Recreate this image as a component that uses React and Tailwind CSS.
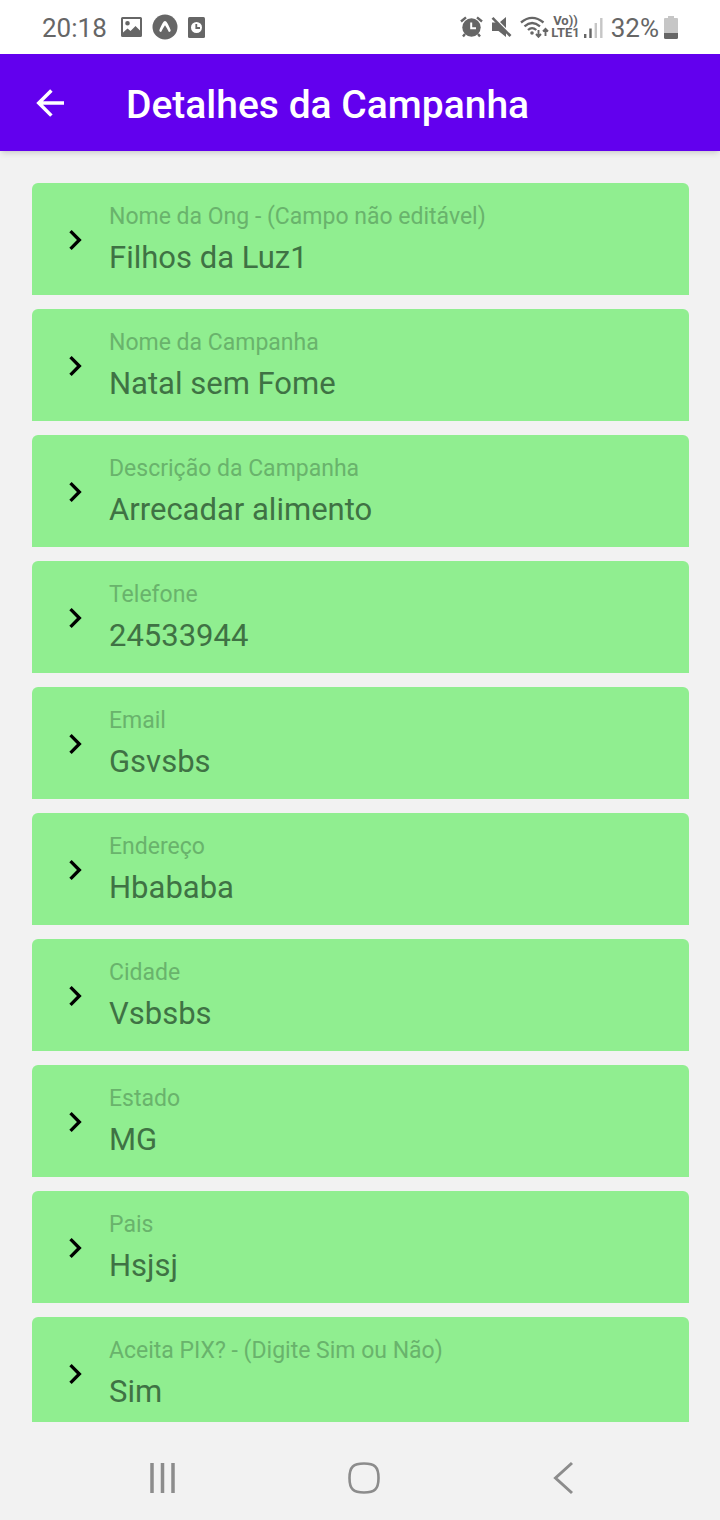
import React from "react";

const fields = [
  { id: "ong", label: "Nome da Ong - (Campo não editável)", value: "Filhos da Luz1" },
  { id: "campanha", label: "Nome da Campanha", value: "Natal sem Fome" },
  { id: "descricao", label: "Descrição da Campanha", value: "Arrecadar alimento" },
  { id: "telefone", label: "Telefone", value: "24533944" },
  { id: "email", label: "Email", value: "Gsvsbs" },
  { id: "endereco", label: "Endereço", value: "Hbababa" },
  { id: "cidade", label: "Cidade", value: "Vsbsbs" },
  { id: "estado", label: "Estado", value: "MG" },
  { id: "pais", label: "Pais", value: "Hsjsj" },
  { id: "pix", label: "Aceita PIX? - (Digite Sim ou Não)", value: "Sim" },
];

function PictureIcon() {
  return (
    <svg className="h-5 w-[21px]" viewBox="0 0 21 20" aria-hidden="true">
      <path
        fill="#666"
        fillRule="evenodd"
        d="M1.500 0H19.500Q21 0 21 1.500V18.500Q21 20 19.500 20H1.500Q0 20 0 18.500V1.500Q0 0 1.500 0ZM2 2V15.500L6.500 11.500L9.500 14L14.500 9L19 13.500V2ZM6.500 4A2.300 2.300 0 1 1 6.500 8.600A2.300 2.300 0 1 1 6.500 4Z"
      />
    </svg>
  );
}

function ExpoIcon() {
  return (
    <svg className="size-[26px]" viewBox="0 0 26 26" aria-hidden="true">
      <circle cx="13" cy="13" r="12.500" fill="#666" />
      <path
        fill="#fff"
        d="M11.600 7.700Q13 6.500 14.400 7.700C16 10 17.600 13 18.700 16.200Q18.600 18.100 16.900 17.900C15.600 15.500 14.500 13.200 13 11.200C11.500 13.200 10.400 15.500 9.100 17.900Q7.400 18.100 7.300 16.200C8.400 13 10 10 11.600 7.700Z"
      />
    </svg>
  );
}

function ClockCardIcon() {
  return (
    <svg className="h-[21px] w-[17px]" viewBox="0 0 17 21" aria-hidden="true">
      <rect width="17" height="21" rx="1.500" fill="#666" />
      <circle cx="8.500" cy="10.500" r="5.500" fill="#fff" />
      <path d="M8.300 7V11H12" fill="none" stroke="#666" strokeWidth="1.800" />
    </svg>
  );
}

function AlarmIcon() {
  return (
    <svg className="h-[22px] w-[23px]" viewBox="0 0 23 22" aria-hidden="true">
      <path
        d="M1 5.500L6 1.300M22 5.500L17 1.300M5 18L3 20.500M18 18L20 20.500"
        stroke="#666"
        strokeWidth="2.400"
      />
      <circle cx="11.500" cy="11.500" r="9.200" fill="#666" />
      <path d="M11.200 6.500V12.200H16" fill="none" stroke="#fff" strokeWidth="2" />
    </svg>
  );
}

function MuteIcon() {
  return (
    <svg className="h-[22px] w-[21px]" viewBox="0 0 21 22" aria-hidden="true">
      <path fill="#666" d="M1 6.500H6L15 15.500V21L7.500 15H1ZM9 6L15 1V12Z" />
      <path d="M1.500 1.800L19.500 20" stroke="#666" strokeWidth="2.600" />
    </svg>
  );
}

function WifiIcon() {
  return (
    <svg className="h-[22px] w-[29px]" viewBox="0 0 29 22" aria-hidden="true">
      <g fill="none" stroke="#666" strokeWidth="2.300">
        <path d="M1 6.500Q12 -2.800 23.500 6.500" />
        <path d="M4.500 10.300Q12 3.800 20 10.300" />
        <path d="M8 14Q12 10.200 16.300 14" />
      </g>
      <circle cx="12" cy="17" r="1.800" fill="#666" />
      <path
        d="M18.500 14V20.500M16 18L18.500 20.800L21 18M25.500 20V13M23 15.500L25.500 12.800L28 15.500"
        fill="none"
        stroke="#666"
        strokeWidth="1.900"
      />
    </svg>
  );
}

function SignalIcon() {
  return (
    <svg className="h-5 w-[19px]" viewBox="0 0 19 20" aria-hidden="true">
      <path d="M1.200 16V20M6.500 10.500V20" stroke="#666" strokeWidth="2.400" />
      <path d="M11.800 5V20M17.300 0V20" stroke="#c6c6c6" strokeWidth="2.400" />
    </svg>
  );
}

function BatteryIcon() {
  return (
    <svg className="h-[23px] w-[14px]" viewBox="0 0 14 23" aria-hidden="true">
      <path fill="#c6c6c6" d="M4 0H10V2H13Q14 2 14 3V17H0V3Q0 2 1 2H4Z" />
      <path fill="#666" d="M0 17H14V21.500Q14 23 12.500 23H1.500Q0 23 0 21.500Z" />
    </svg>
  );
}

function StatusBar() {
  return (
    <div className="flex h-[54px] shrink-0 items-center justify-between bg-white px-[42px] text-[#666]">
      <div className="flex items-center">
        <span className="mr-[14px] pt-0.5 text-[26px] leading-8">20:18</span>
        <div className="flex items-center gap-2.5">
          <PictureIcon />
          <ExpoIcon />
          <ClockCardIcon />
        </div>
      </div>
      <div className="flex items-center">
        <div className="flex items-center gap-2">
          <AlarmIcon />
          <MuteIcon />
          <WifiIcon />
        </div>
        <div className="ml-0.5 flex flex-col items-center text-[13px] leading-[12px] font-bold">
          <span>Vo))</span>
          <span>LTE1</span>
        </div>
        <div className="ml-1 flex items-center pt-0.5">
          <SignalIcon />
        </div>
        <span className="mr-[5px] ml-2 pt-0.5 text-[26px] leading-8">32%</span>
        <BatteryIcon />
      </div>
    </div>
  );
}

function Header() {
  return (
    <header className="z-10 flex h-[97px] shrink-0 items-center bg-[#6200ee] pt-1 pl-[29px] text-white shadow-md">
      <button type="button" aria-label="Voltar" className="mb-1 shrink-0">
        <svg className="size-[42px]" viewBox="0 0 24 24" fill="currentColor" aria-hidden="true">
          <path d="M20,11V13H8L13.500,18.500L12.080,19.920L4.160,12L12.080,4.080L13.500,5.500L8,11H20Z" />
        </svg>
      </button>
      <h1 className="ml-[55px] text-[39px] leading-[48px] font-medium">Detalhes da Campanha</h1>
    </header>
  );
}

function Field({ id, label, value }) {
  return (
    <div className="flex h-28 shrink-0 items-center rounded-t-md bg-[#90ee90] pr-6 pl-[23px]">
      <svg className="mt-0.5 size-10 shrink-0" viewBox="0 0 24 24" aria-hidden="true">
        <path d="M8.590,16.580L13.170,12L8.590,7.410L10,6L16,12L10,18L8.590,16.580Z" />
      </svg>
      <div className="ml-[14px] flex min-w-0 flex-1 flex-col gap-0.5 pt-1.5">
        <label htmlFor={id} className="text-[23px] leading-7 text-[#69b36c]">
          {label}
        </label>
        <input
          id={id}
          type="text"
          readOnly
          defaultValue={value}
          className="h-12 w-full bg-transparent text-[31px] text-[#3f7244] outline-none"
        />
      </div>
    </div>
  );
}

function NavBar() {
  return (
    <nav className="mt-[14px] grid h-[84px] shrink-0 grid-cols-3 items-center justify-items-center pr-14 pl-16 text-[#8c8c8c]">
      <button type="button" aria-label="Recentes">
        <svg className="size-9" viewBox="0 0 36 36" aria-hidden="true">
          <path d="M6 3V33M16.500 3V33M27 3V33" stroke="currentColor" strokeWidth="3.500" />
        </svg>
      </button>
      <button type="button" aria-label="Início">
        <svg className="size-9" viewBox="0 0 36 36" fill="none" aria-hidden="true">
          <path
            d="M18 3.500C28.500 3.500 32.500 6.500 32.500 18C32.500 29.500 28.500 32.500 18 32.500C7.500 32.500 3.500 29.500 3.500 18C3.500 6.500 7.500 3.500 18 3.500Z"
            stroke="currentColor"
            strokeWidth="2.600"
          />
        </svg>
      </button>
      <button type="button" aria-label="Voltar à tela anterior">
        <svg className="size-9" viewBox="0 0 36 36" fill="none" aria-hidden="true">
          <path d="M26 3L9.500 18L26 33" stroke="currentColor" strokeWidth="3" />
        </svg>
      </button>
    </nav>
  );
}

export default function App() {
  return (
    <div className="flex h-screen flex-col bg-[#f2f2f2] font-['Roboto',sans-serif]">
      <StatusBar />
      <Header />
      <main className="flex min-h-0 flex-1 flex-col gap-[14px] overflow-y-auto pt-8 pr-[31px] pl-8 [scrollbar-width:none]">
        {fields.map((field) => (
          <Field key={field.id} {...field} />
        ))}
      </main>
      <NavBar />
    </div>
  );
}
